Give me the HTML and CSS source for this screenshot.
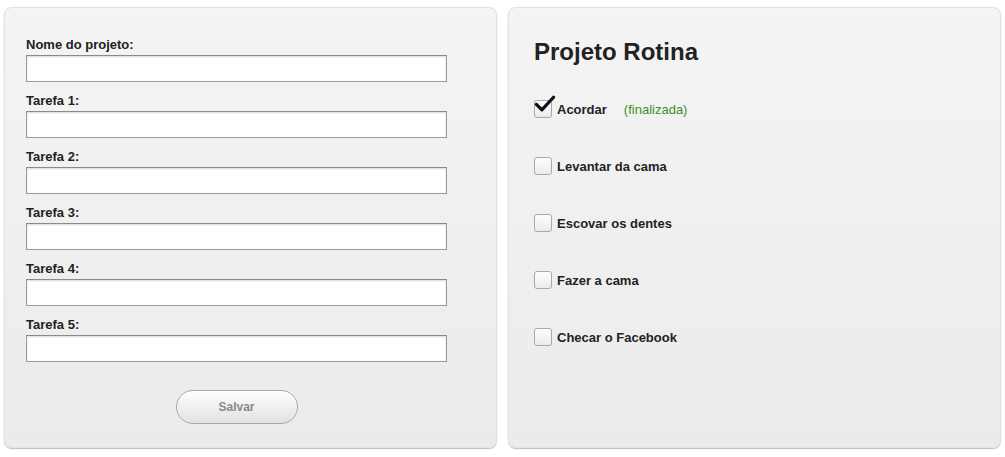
FILE: index.html
```html
<!DOCTYPE html>
<html lang="pt">
<head>
<meta charset="utf-8">
<title>Projeto Rotina</title>
<link rel="stylesheet" href="styles.css">
</head>
<body>
<div class="page">
  <section class="panel form-panel">
    <form class="form">
      <label class="field-label">Nome do projeto:</label>
      <input class="field" type="text">
      <label class="field-label">Tarefa 1:</label>
      <input class="field" type="text">
      <label class="field-label">Tarefa 2:</label>
      <input class="field" type="text">
      <label class="field-label">Tarefa 3:</label>
      <input class="field" type="text">
      <label class="field-label">Tarefa 4:</label>
      <input class="field" type="text">
      <label class="field-label">Tarefa 5:</label>
      <input class="field" type="text">
      <div class="actions"><button type="button" class="btn">Salvar</button></div>
    </form>
  </section>
  <section class="panel list-panel">
    <h1 class="title">Projeto Rotina</h1>
    <ul class="tasks">
      <li class="task">
        <span class="box checked"><svg class="check" viewBox="0 0 24 20" width="22" height="18"><path d="M2.5 10.5 L8.5 16.5 L21.5 2.5" fill="none" stroke="#111" stroke-width="3.6" stroke-linecap="round" stroke-linejoin="round"/></svg></span>
        <span class="task-name">Acordar</span>
        <span class="done">(finalizada)</span>
      </li>
      <li class="task"><span class="box"></span><span class="task-name">Levantar da cama</span></li>
      <li class="task"><span class="box"></span><span class="task-name">Escovar os dentes</span></li>
      <li class="task"><span class="box"></span><span class="task-name">Fazer a cama</span></li>
      <li class="task"><span class="box"></span><span class="task-name">Checar o Facebook</span></li>
    </ul>
  </section>
</div>
</body>
</html>
```
FILE: styles.css
```css
* { box-sizing: border-box; }
html, body { margin: 0; padding: 0; background: #fff; }
body { font-family: "Liberation Sans", Arial, sans-serif; color: #222; }
.page {
  display: flex;
  gap: 11px;
  padding: 7px 4px 0 4px;
  height: 457px;
}
.panel {
  width: 493px;
  height: 441px;
  border-radius: 8px;
  background: linear-gradient(#f4f4f4, #ebebeb);
  border: 1px solid #e2e2e2;
  box-shadow: 0 1px 1px #bdbdbd, 0 0 1px #d0d0d0;
}
.form-panel { padding: 29px 0 0 21px; }
.form { display: flex; flex-direction: column; width: 421px; }
.field-label {
  font-weight: bold;
  font-size: 13px;
  line-height: 16px;
  height: 16px;
  color: #222;
}
.field {
  margin: 2px 0 11px 0;
  width: 421px;
  height: 27px;
  border: 1px solid #9a9a9a;
  border-top-color: #8a8a8a;
  background: #fff;
  box-shadow: inset 0 1px 2px rgba(0,0,0,0.15);
  padding: 0 4px;
  font-size: 13px;
}
.actions { display: flex; justify-content: center; margin-top: 17px; }
.btn {
  width: 122px;
  height: 34px;
  border-radius: 17px;
  border: 1px solid #a9a9a9;
  background: linear-gradient(#fdfdfd, #e2e2e2);
  color: #8a8a8a;
  font-family: "Liberation Sans", Arial, sans-serif;
  font-weight: bold;
  font-size: 12px;
  box-shadow: inset 0 1px 0 #fff;
}
.list-panel { padding: 29px 0 0 25px; }
.title {
  margin: 0;
  font-size: 24px;
  line-height: 30px;
  font-weight: bold;
  color: #222;
}
.tasks { list-style: none; margin: 33px 0 0 0; padding: 0; display: flex; flex-direction: column; gap: 39px; }
.task { display: flex; align-items: center; height: 18px; font-size: 13px; }
.box {
  position: relative;
  width: 18px;
  height: 18px;
  border: 1px solid #a8a8a8;
  border-radius: 3px;
  background: linear-gradient(#fdfdfd, #ececec);
  margin-right: 5px;
  flex: none;
}
.check { position: absolute; left: -1px; top: -6px; }
.task-name { font-weight: bold; color: #222; }
.done { color: #3d8f1e; margin-left: 17px; }
```
